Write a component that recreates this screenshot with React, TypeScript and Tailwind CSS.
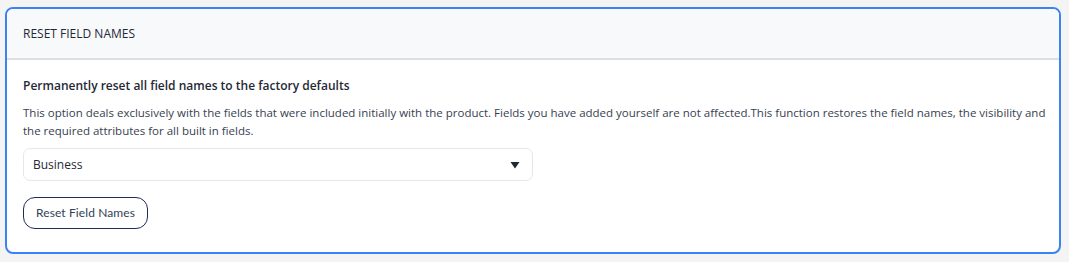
export default function App() {
  return (
    <div className="w-[1069px] h-[262px] bg-[#f4f4f4] pt-[7px] pl-[5px] font-['Open_Sans',sans-serif]">
      <div className="w-[1056px] h-[247px] rounded-[8px] border-2 border-[#3b82f6] bg-white overflow-hidden">
        <div className="h-[51px] bg-[#f8f9fb] border-b-2 border-[#dcdfe4] flex items-center pl-[16px]">
          <span className="text-[12px] text-[#1f2937]">RESET FIELD NAMES</span>
        </div>
        <div className="pl-[16px] pr-[8px] pt-[17px]">
          <div className="text-[12px] font-semibold text-[#1f2937] leading-[18px]">
            Permanently reset all field names to the factory defaults
          </div>
          <p className="mt-[9px] text-[11.5px] leading-[18px] text-[#374151]">
            This option deals exclusively with the fields that were included initially with the product. Fields you have added yourself are not affected.This function restores the field names, the visibility and the required attributes for all built in fields.
          </p>
          <div className="mt-[8px] w-[510px] h-[33px] rounded-[7px] border border-[#e2e8f0] flex items-center justify-between pl-[9px] pr-[12px]">
            <span className="text-[12px] text-[#1f2937]">Business</span>
            <svg width="10" height="8" viewBox="0 0 10 8"><path d="M0.5 1 L9.5 1 L5 7.5 Z" fill="#1f2937" /></svg>
          </div>
          <button className="mt-[16px] h-[32px] px-[12px] rounded-[12px] border border-[#1e2b5c] text-[12px] text-[#334155] font-['Lato',sans-serif] tracking-[0.1px]">
            Reset Field Names
          </button>
        </div>
      </div>
    </div>
  );
}
